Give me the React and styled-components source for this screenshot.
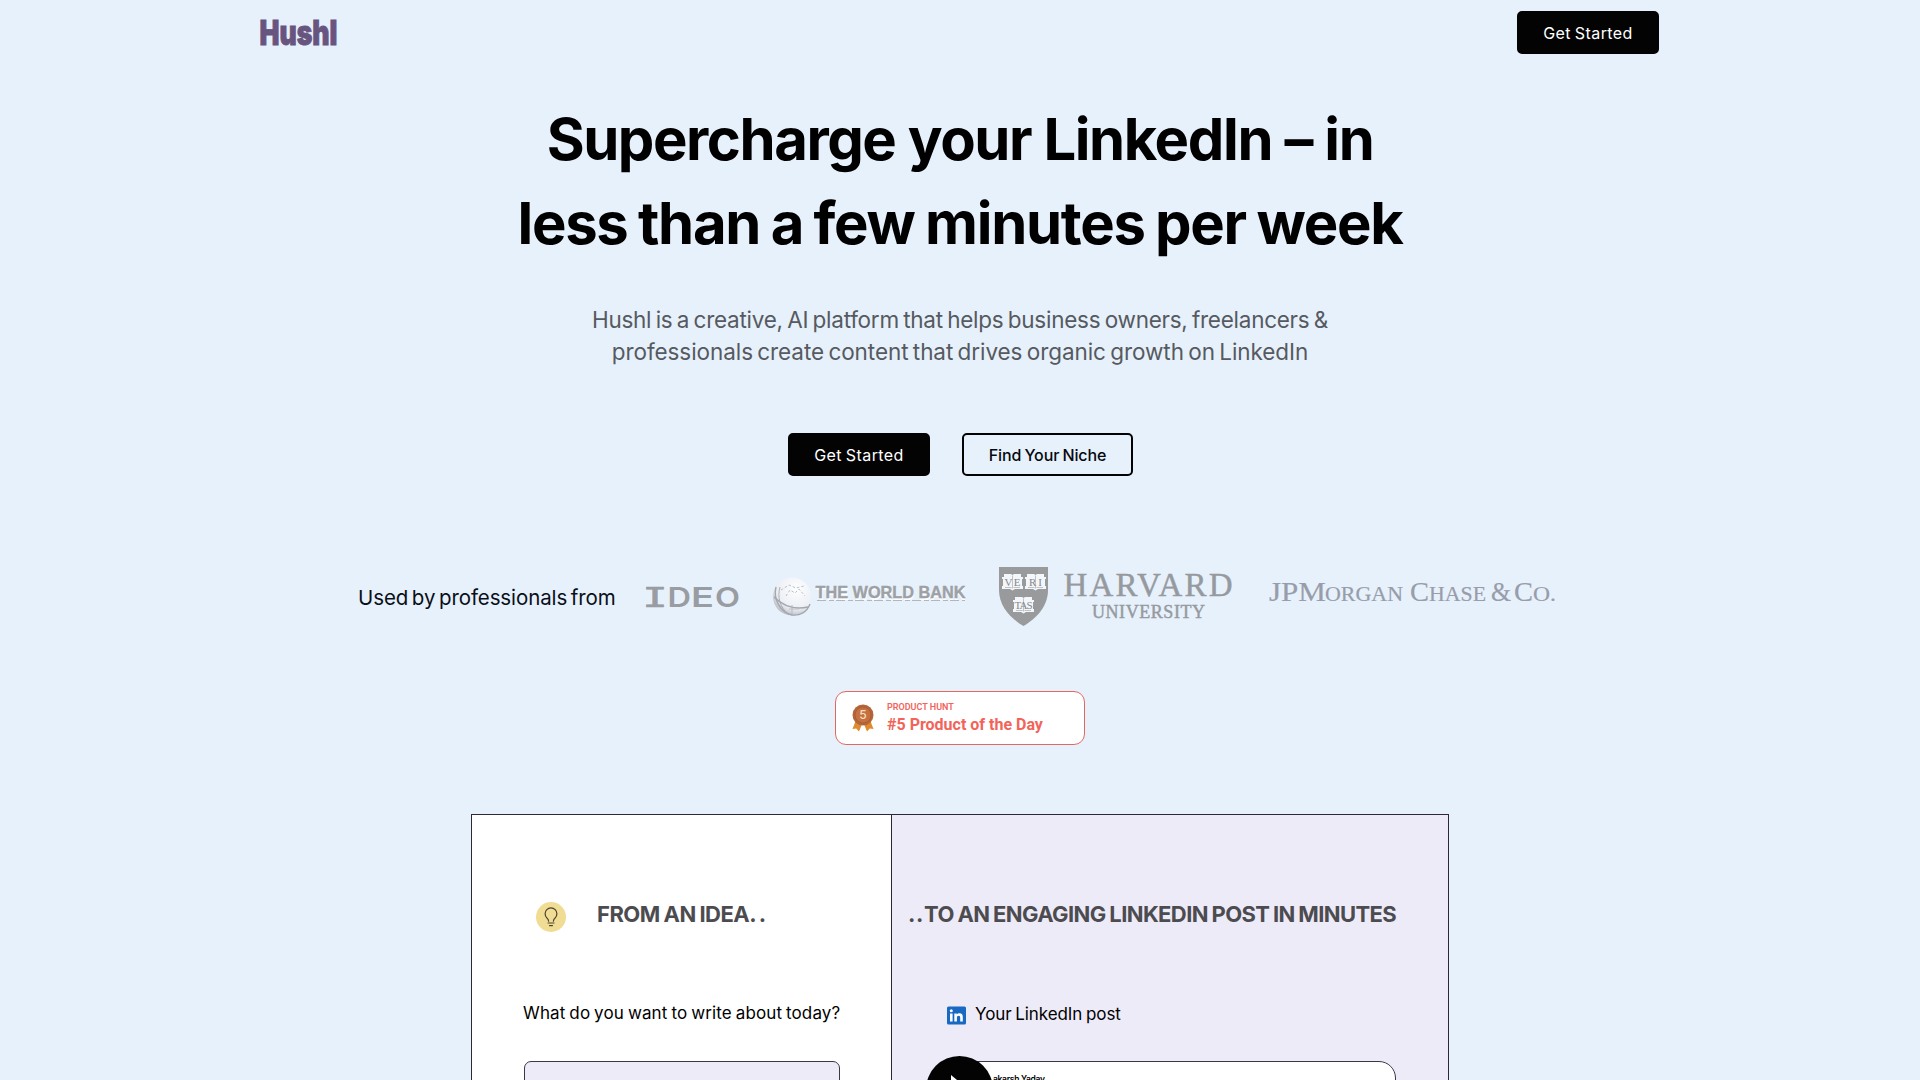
import React from 'react';
import styled, { createGlobalStyle } from 'styled-components';

const GlobalStyle = createGlobalStyle`
  *, *::before, *::after { box-sizing: border-box; }
  html, body { margin: 0; padding: 0; }
  body {
    background: #e7f1fc;
    color: #000;
    font-family: Inter, "Liberation Sans", sans-serif;
    overflow: hidden;
  }
`;

const Page = styled.div`
  height: 1080px;
  overflow: hidden;
  display: flex;
  flex-direction: column;
  align-items: center;
`;

const Header = styled.header`
  width: 1400px;
  height: 65px;
  margin-right: 2px;
  display: flex;
  align-items: center;
  justify-content: space-between;
  flex: none;
`;

const Button = styled.button`
  width: ${(p) => p.$width}px;
  height: 43px;
  padding: 0;
  display: flex;
  align-items: center;
  justify-content: center;
  border: 2px solid #030303;
  border-radius: 5px;
  background: ${(p) => (p.$outline ? 'transparent' : '#030303')};
  color: ${(p) => (p.$outline ? '#05080d' : '#fff')};
  font-family: inherit;
  font-size: 16px;
  font-weight: ${(p) => (p.$outline ? 450 : 400)};
  letter-spacing: ${(p) => (p.$outline ? '-0.1px' : '0.4px')};
  word-spacing: -1px;
  white-space: nowrap;
`;

const Hero = styled.section`
  display: flex;
  flex-direction: column;
  align-items: center;
  padding-top: 32px;
  flex: none;
`;

const Title = styled.h1`
  margin: 0;
  font-size: 58px;
  line-height: 84px;
  font-weight: 650;
  text-align: center;
`;

const Lead = styled.p`
  margin: 39px 0 0;
  font-size: 22.5px;
  line-height: 32px;
  font-weight: 380;
  color: #565a60;
  text-align: center;
`;

const Line = styled.span`
  display: block;
  white-space: nowrap;
  letter-spacing: ${(p) => p.$track}px;
  word-spacing: ${(p) => p.$words || 0}px;
`;

const Actions = styled.div`
  display: flex;
  gap: 32px;
  margin: 65px 0 0 1px;
`;

const Clients = styled.div`
  width: 1204px;
  height: 60px;
  margin-top: 91px;
  display: flex;
  align-items: center;
  flex: none;
`;

const ClientsLabel = styled.span`
  width: 287px;
  padding-top: 1px;
  font-size: 20.5px;
  line-height: 24px;
  letter-spacing: -0.1px;
  word-spacing: -2px;
  white-space: nowrap;
  color: #0a0f18;
`;

const ClientLogo = styled.svg`
  display: block;
  flex: none;
  overflow: visible;
  margin-right: ${(p) => p.$gap || 0}px;
`;

const Badge = styled.div`
  width: 250px;
  height: 54px;
  margin-top: 64px;
  padding-left: 16px;
  display: flex;
  align-items: center;
  gap: 13px;
  border: 1px solid #e2695f;
  border-radius: 11px;
  background: #fff;
  color: #f2645a;
  font-family: Roboto, sans-serif;
  font-weight: 700;
  flex: none;
`;

const BadgeText = styled.div`
  display: flex;
  flex-direction: column;
  padding-top: 2px;
`;

const BadgeKicker = styled.span`
  font-size: 9px;
  line-height: 11px;
  font-weight: 600;
`;

const BadgeTitle = styled.span`
  font-size: 16px;
  line-height: 24px;
  white-space: nowrap;
`;

const Demo = styled.section`
  width: 978px;
  height: 400px;
  margin-top: 69px;
  display: grid;
  grid-template-columns: 420px 1fr;
  border: 1px solid #2b2838;
  flex: none;
`;

const Column = styled.div`
  padding: 87px 0 0 ${(p) => p.$left}px;
  background: ${(p) => p.$bg};
  border-right: ${(p) => (p.$divided ? '1px solid #2b2838' : 'none')};
`;

const ColumnHeading = styled.div`
  height: 30px;
  padding-left: ${(p) => p.$inset || 0}px;
  display: flex;
  align-items: center;
  gap: 31px;
`;

const ColumnTitle = styled.h2`
  margin: 0;
  padding-bottom: 5px;
  font-size: 22px;
  line-height: 25px;
  font-weight: 650;
  color: #4c4c50;
  letter-spacing: ${(p) => p.$track}px;
  word-spacing: -1px;
  white-space: nowrap;
`;

const Dots = styled.span`
  letter-spacing: ${(p) => p.$track}px;
`;

const BulbDisc = styled.span`
  width: 30px;
  height: 30px;
  border-radius: 50%;
  background: #f1dc94;
  display: flex;
  align-items: center;
  justify-content: center;
`;

const Prompt = styled.div`
  height: 24px;
  margin-top: ${(p) => p.$top}px;
  margin-left: ${(p) => p.$inset || 0}px;
  display: flex;
  align-items: center;
  gap: 9px;
  font-size: 17px;
  font-weight: 430;
  letter-spacing: ${(p) => p.$track}px;
  word-spacing: -1px;
  white-space: nowrap;
`;

const IdeaBox = styled.div`
  width: 316px;
  height: 200px;
  margin: 36px 0 0 1px;
  border: 1px solid #3a3846;
  border-radius: 7px;
  background: #eeebf9;
`;

const PostCard = styled.div`
  position: relative;
  width: 452px;
  height: 200px;
  margin: 35px 0 0 36px;
  padding: 11px 0 0 48px;
  border: 1px solid #3a3846;
  border-radius: 17px;
  background: #fff;
`;

const Author = styled.span`
  display: block;
  font-size: 8.5px;
  line-height: 12px;
  font-weight: 600;
  letter-spacing: -0.3px;
`;

const PlayButton = styled.span`
  position: absolute;
  left: -19px;
  top: -6px;
  width: 67px;
  height: 67px;
  border-radius: 50%;
  background: #030303;
  display: flex;
  align-items: center;
  justify-content: center;
`;

const HushlLogo = () => (
  <ClientLogo width="78" height="30" viewBox="0 0 78 30">
    <text x="0.500" y="27" fontFamily="Inter, sans-serif" fontWeight="900" fontSize="34" fill="#67557f"
      stroke="#67557f" strokeWidth="0.9" textLength="78" lengthAdjust="spacingAndGlyphs">Hushl</text>
  </ClientLogo>
);

const IdeoLogo = () => (
  <ClientLogo width="94" height="28" viewBox="0 0 94 28" $gap={33} fill="#999da2">
    <g fontFamily="Inter, sans-serif" fontWeight="600" fontSize="27">
      <text x="-2.500" y="23.500" fontFamily="DejaVu Sans Mono, monospace" fontWeight="400" stroke="#999da2" strokeWidth="0.7"
        textLength="25" lengthAdjust="spacingAndGlyphs">I</text>
      <text x="22.500" y="23.500" textLength="23.500" lengthAdjust="spacingAndGlyphs">D</text>
      <text x="46" y="23.500" textLength="23" lengthAdjust="spacingAndGlyphs">E</text>
      <text x="70" y="23.500" textLength="25" lengthAdjust="spacingAndGlyphs">O</text>
    </g>
  </ClientLogo>
);

const WorldBankLogo = () => (
  <ClientLogo width="194" height="44" viewBox="0 0 194 44" $gap={33}>
    <defs>
      <radialGradient id="globe" cx="0.62" cy="0.3" r="0.8">
        <stop offset="0" stopColor="#fdfeff" />
        <stop offset="0.65" stopColor="#eceff4" />
        <stop offset="1" stopColor="#a9adb3" />
      </radialGradient>
    </defs>
    <circle cx="20" cy="21.500" r="19" fill="url(#globe)" />
    <g fill="none" stroke="#a4a8ae" strokeWidth="0.9">
      <path d="M4 12C1 24 8 37 20 40c8 1 15-3 18-11" strokeWidth="1.400" />
      <path d="M2 22c8 8 20 13 34 10" strokeWidth="1.600" />
      <path d="M8 12c-3 10 0 21 9 28" />
      <path d="M9 15l8-5 7 3 8-2M14 21l4-6 5 3 4-4 6 7" strokeDasharray="2.500 2" stroke="#b3b7bd" />
      <path d="M17 34h10M20 30v9" stroke="#b5b9bf" />
    </g>
    <text x="44.500" y="25" fontFamily="Liberation Sans, Arial, sans-serif" fontWeight="700" fontSize="16.500" fill="#fff"
      textLength="149" lengthAdjust="spacingAndGlyphs" aria-hidden="true">THE WORLD BANK</text>
    <text x="43.500" y="23" fontFamily="Liberation Sans, Arial, sans-serif" fontWeight="700" fontSize="16.500" fill="#9da1a6"
      stroke="#9da1a6" strokeWidth="0.4" textLength="150" lengthAdjust="spacingAndGlyphs">THE WORLD BANK</text>
    <path d="M45 25.500h148" stroke="#b3b7bd" strokeDasharray="9 3 5 2" />
  </ClientLogo>
);

const Book = ({ x, y, label, span }) => (
  <g transform={`translate(${x} ${y})`}>
    <path d="M0 3h2V0h7l1.500 1L12 0h7v3h2v2h-1v7h1v3h-8l-2.500 1.500L8 15H0v-3h1V5H0z" fill="#f3f7fb" />
    <path d="M10.500 1.500v13M3 13.500h6.500M11.500 13.500H18" stroke="#9b9d9e" strokeWidth="0.6" fill="none" />
    <text x={10.5 - span / 2} y="11.500" fontFamily="Liberation Serif, serif" fontSize="11" fill="#85888a"
      textLength={span} lengthAdjust="spacing">{label}</text>
  </g>
);

const HarvardLogo = () => (
  <ClientLogo width="236" height="60" viewBox="0 0 236 60" $gap={33}>
    <path d="M0 0h49v23c0 16-11 28-24.500 36C11 51 0 39 0 23z" fill="#989a9b" />
    <Book x={3} y={7} span={16} label="VE" />
    <Book x={26} y={7} span={13} label="RI" />
    <Book x={14} y={30} span={18} label="TAS" />
    <g fontFamily="Liberation Serif, serif" fill="#969a9f" stroke="#969a9f" strokeWidth="0.45">
      <text x="64.500" y="29" fontSize="33" textLength="169" lengthAdjust="spacing">HARVARD</text>
      <text x="93" y="51" fontSize="18" textLength="113" lengthAdjust="spacing">UNIVERSITY</text>
    </g>
  </ClientLogo>
);

const JPMorganLogo = () => (
  <ClientLogo width="288" height="40" viewBox="0 0 288 40">
    <g fontFamily="Liberation Serif, serif" fill="#979daa" stroke="#979daa" strokeWidth="0.2">
      <text y="24" x="1" fontSize="28" textLength="57" lengthAdjust="spacingAndGlyphs">JPM</text>
      <text y="24" x="57" fontSize="21" textLength="78" lengthAdjust="spacingAndGlyphs">ORGAN</text>
      <text y="24" x="142" fontSize="28" textLength="19" lengthAdjust="spacingAndGlyphs">C</text>
      <text y="24" x="161" fontSize="21" textLength="57" lengthAdjust="spacingAndGlyphs">HASE</text>
      <text y="24" x="223" fontSize="28" textLength="20" lengthAdjust="spacingAndGlyphs">&amp;</text>
      <text y="24" x="246" fontSize="28" textLength="19" lengthAdjust="spacingAndGlyphs">C</text>
      <text y="24" x="265" fontSize="21" textLength="23" lengthAdjust="spacingAndGlyphs">O.</text>
    </g>
  </ClientLogo>
);

const Medal = () => (
  <svg width="22" height="28" viewBox="0 0 22 28">
    <path d="M4 16L0.500 25l3.700-.4L7 27.500 10.500 19zM18 16l3.500 9-3.700-.4L15 27.500 11.500 19z" fill="#df8a2c" />
    <circle cx="11" cy="11" r="10.500" fill="#b5653a" />
    <circle cx="11" cy="11" r="8" fill="#c4713f" stroke="#a65a35" strokeWidth="0.8" />
    <text x="11" y="15.300" textAnchor="middle" fontFamily="Inter, sans-serif" fontWeight="500" fontSize="12" fill="#fbdcc0">5</text>
  </svg>
);

const Bulb = () => (
  <svg width="14" height="20" viewBox="0 0 14 20" fill="none" stroke="#4b4430" strokeWidth="1.200" strokeLinecap="round">
    <path d="M4.600 14.200c0-1.800-.7-2.400-1.700-3.200A5.900 5.900 0 1 1 11.100 11c-1 .8-1.700 1.400-1.700 3.200M4 16h6M5.500 18.600h3" />
  </svg>
);

const LinkedInMark = () => (
  <ClientLogo width="19" height="18" viewBox="0 -1.500 19 18">
    <rect width="19" height="18" rx="1.500" fill="#1769c2" />
    <path d="M3 7h2.600v8H3zM7.300 7h2.500v1.100c.5-.8 1.400-1.300 2.600-1.300 2.600 0 3.400 1.600 3.400 4V15h-2.600v-3.800c0-1.200-.3-2-1.500-2s-1.800.8-1.800 2V15H7.300z" fill="#fff" />
    <circle cx="4.300" cy="4.300" r="1.500" fill="#fff" />
  </ClientLogo>
);

const PlayIcon = () => (
  <svg width="20" height="32" viewBox="0 0 20 32">
    <path d="M1 1l18 15L1 31z" fill="#fff" />
  </svg>
);

export default function App() {
  return (
    <Page>
      <GlobalStyle />
      <Header>
        <HushlLogo />
        <Button $width={142}>Get Started</Button>
      </Header>

      <Hero>
        <Title>
          <Line $track={-1.45}>Supercharge your LinkedIn – in</Line>
          <Line $track={-1.3} $words={-1.9}>less than a few minutes per week</Line>
        </Title>
        <Lead>
          <Line $track={-0.26} $words={-1.7}>Hushl is a creative, AI platform that helps business owners, freelancers &amp;</Line>
          <Line $track={-0.07} $words={-1.9}>professionals create content that drives organic growth on LinkedIn</Line>
        </Lead>
        <Actions>
          <Button $width={142}>Get Started</Button>
          <Button $width={171} $outline>Find Your Niche</Button>
        </Actions>
      </Hero>

      <Clients>
        <ClientsLabel>Used by professionals from</ClientsLabel>
        <IdeoLogo />
        <WorldBankLogo />
        <HarvardLogo />
        <JPMorganLogo />
      </Clients>

      <Badge>
        <Medal />
        <BadgeText>
          <BadgeKicker>PRODUCT HUNT</BadgeKicker>
          <BadgeTitle>#5 Product of the Day</BadgeTitle>
        </BadgeText>
      </Badge>

      <Demo>
        <Column $bg="#fff" $left={51} $divided>
          <ColumnHeading $inset={13}>
            <BulbDisc><Bulb /></BulbDisc>
            <ColumnTitle $track={-0.5}>FROM AN IDEA<Dots $track={2}>..</Dots></ColumnTitle>
          </ColumnHeading>
          <Prompt $top={69} $track={0.13}>What do you want to write about today?</Prompt>
          <IdeaBox />
        </Column>
        <Column $bg="#eeebf9" $left={16}>
          <ColumnHeading>
            <ColumnTitle $track={-0.6}><Dots $track={0.7}>..</Dots>TO AN ENGAGING LINKEDIN POST IN MINUTES</ColumnTitle>
          </ColumnHeading>
          <Prompt $top={70} $inset={39} $track={-0.08}>
            <LinkedInMark />
            Your LinkedIn post
          </Prompt>
          <PostCard>
            <Author>akarsh Yadav</Author>
            <PlayButton><PlayIcon /></PlayButton>
          </PostCard>
        </Column>
      </Demo>
    </Page>
  );
}
